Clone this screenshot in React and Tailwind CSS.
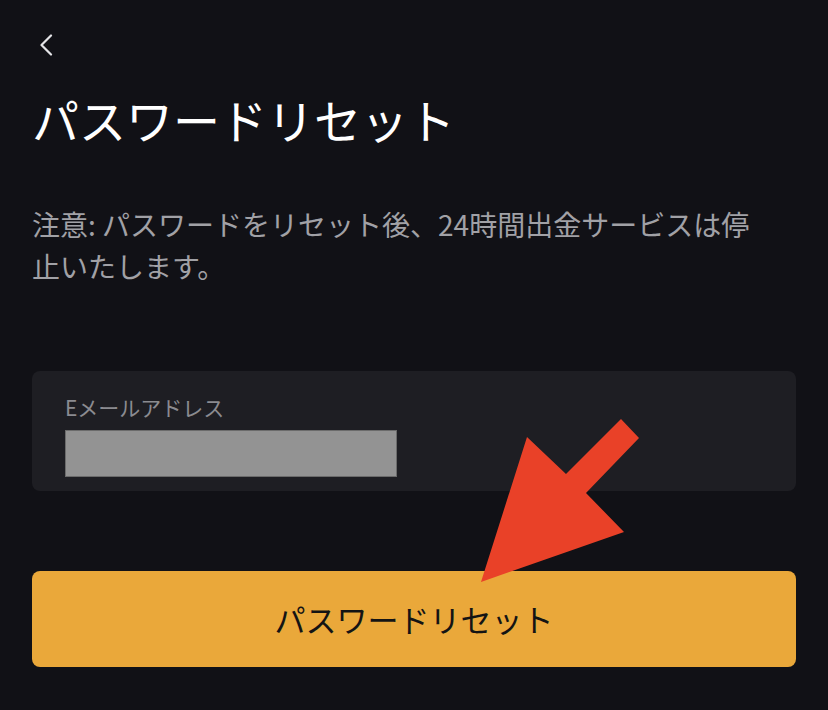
export default function App() {
  return (
    <div
      className="relative min-h-[710px] w-full overflow-hidden bg-[#111116] px-8"
      style={{ fontFamily: '"Noto Sans CJK JP", "Noto Sans", sans-serif' }}
    >
      {/* back button */}
      <div className="pt-[34px] pl-[7px]">
        <svg width="14" height="22" viewBox="0 0 14 22" fill="none">
          <path d="M12 1.5 L2.5 11 L12 20.5" stroke="#e4e4e7" strokeWidth="2.2" strokeLinecap="round" strokeLinejoin="round" />
        </svg>
      </div>

      <h1 className="mt-[39px] text-[47px] leading-[47px] font-normal text-white">
        パスワードリセット
      </h1>

      <p className="mt-[61px] max-w-[735px] text-[28px] leading-[42px] text-[#a1a1a6]">
        注意: パスワードをリセット後、24時間出金サービスは停止いたします。
      </p>

      {/* email field */}
      <div className="mt-[84px] h-[120px] rounded-lg bg-[#1e1e23] px-[33px] pt-[22px]">
        <div className="text-[21px] leading-[28px] text-[#8b8b90]">Eメールアドレス</div>
        <div className="mt-[9px] h-[47px] w-[332px] border border-[#6b6b6b] bg-[#939393]"></div>
      </div>

      <button className="mt-[80px] flex h-[96px] w-full items-center justify-center rounded-lg bg-[#eaa83a] text-[31px] text-[#141414]">
        パスワードリセット
      </button>

      {/* annotation arrow */}
      <svg className="pointer-events-none absolute top-0 left-0" width="828" height="710" viewBox="0 0 828 710">
        <polygon
          points="481,582 527,437 566,474 621,419 639,438 586,493 624,532"
          fill="#e94128"
        />
      </svg>
    </div>
  );
}
